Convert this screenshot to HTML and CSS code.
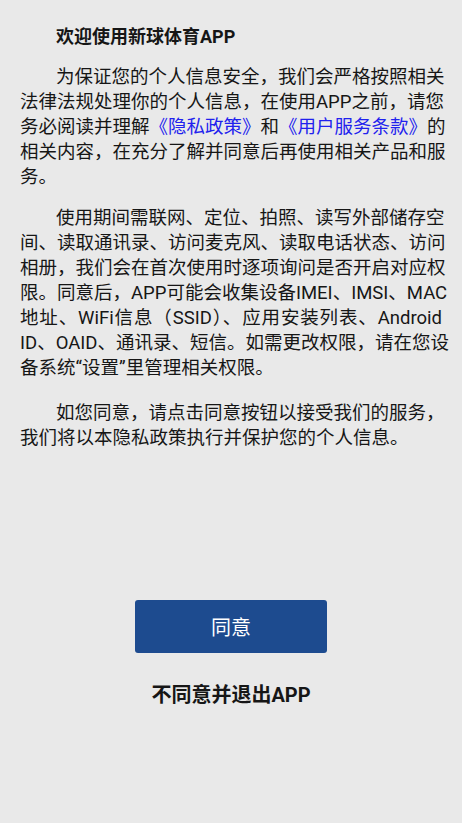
FILE: index.html
```html
<!DOCTYPE html>
<html lang="zh-CN">
<head>
    <meta charset="UTF-8">
    <meta name="viewport" content="width=device-width, initial-scale=1.0">
    <title>隐私政策</title>
    <link rel="stylesheet" href="styles.css">
</head>
<body>
    <div class="page">
        <div class="policy">
            <h1 class="title">欢迎使用新球体育APP</h1>
            <p>
                <span class="line first">为保证您的个人信息安全，我们会严格按照相关</span>
                <span class="line">法律法规处理你的个人信息，在使用APP之前，请您</span>
                <span class="line">务必阅读并理解<a class="link" href="#">《隐私政策》</a>和<a class="link" href="#">《用户服务条款》</a>的</span>
                <span class="line">相关内容，在充分了解并同意后再使用相关产品和服</span>
                <span class="line last">务。</span>
            </p>
            <p>
                <span class="line first">使用期间需联网、定位、拍照、读写外部储存空</span>
                <span class="line">间、读取通讯录、访问麦克风、读取电话状态、访问</span>
                <span class="line">相册，我们会在首次使用时逐项询问是否开启对应权</span>
                <span class="line">限。同意后，APP可能会收集设备IMEI、IMSI、MAC</span>
                <span class="line">地址、WiFi信息（SSID）、应用安装列表、Android</span>
                <span class="line">ID、OAID、通讯录、短信。如需更改权限，请在您设</span>
                <span class="line last">备系统“设置”里管理相关权限。</span>
            </p>
            <p class="closing">
                <span class="line first">如您同意，请点击同意按钮以接受我们的服务，</span>
                <span class="line last">我们将以本隐私政策执行并保护您的个人信息。</span>
            </p>
        </div>
        <div class="actions">
            <button class="agree-button">同意</button>
            <button class="refuse-button">不同意并退出APP</button>
        </div>
    </div>
</body>
</html>
```

FILE: styles.css
```css
html, body {
    margin: 0;
    padding: 0;
    background: #e9e9e9;
}
body {
    font-family: Roboto, "Noto Sans CJK SC", sans-serif;
    color: #161616;
}
.page {
    width: 462px;
    height: 823px;
    box-sizing: border-box;
    padding: 24px 20px 0 20px;
}
.title {
    margin: 0 0 15px 36px;
    font-size: 18px;
    font-weight: bold;
    line-height: 26px;
}
.policy p {
    margin: 0 0 16px 0;
    font-size: 18.5px;
    line-height: 25px;
}
.policy p.closing {
    margin-top: 20px;
    margin-bottom: 0;
}
/* each visual line is justified edge to edge, like the app's text view */
.line {
    display: block;
    text-align: justify;
    text-align-last: justify;
    white-space: nowrap;
}
.line.first {
    padding-left: 36px;
}
.line.last {
    text-align-last: left;
}
.link {
    color: #2121ee;
    text-decoration: none;
}
.actions {
    display: flex;
    flex-direction: column;
    align-items: center;
    margin-top: 149px;
}
.agree-button {
    width: 192px;
    height: 53px;
    border: none;
    border-radius: 3px;
    background: #1d4b8f;
    color: #fff;
    font-family: Roboto, "Noto Sans CJK SC", sans-serif;
    font-size: 20px;
    cursor: pointer;
}
.refuse-button {
    margin-top: 29px;
    border: none;
    background: none;
    padding: 0;
    color: #161616;
    font-family: Roboto, "Noto Sans CJK SC", sans-serif;
    font-size: 20px;
    font-weight: bold;
    line-height: 26px;
    cursor: pointer;
}
```
